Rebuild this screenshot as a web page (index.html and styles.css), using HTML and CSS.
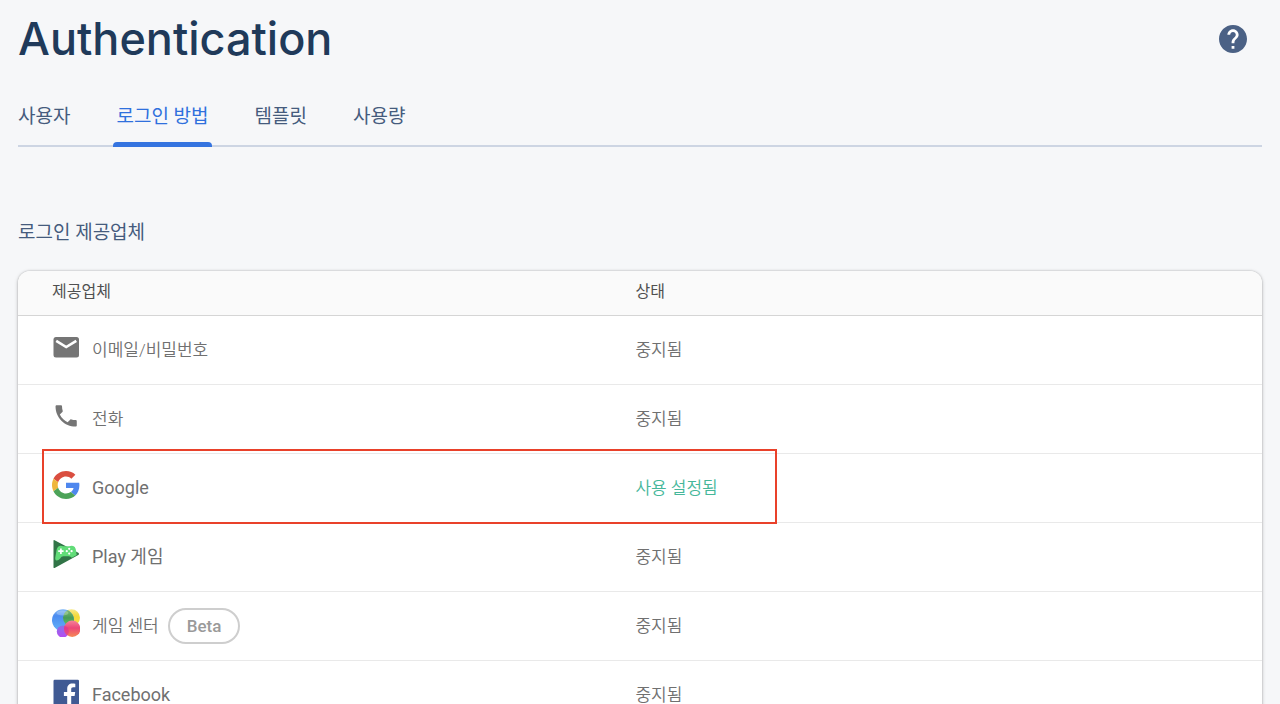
FILE: index.html
```html
<!DOCTYPE html>
<html lang="ko">
<head>
<meta charset="utf-8">
<meta name="viewport" content="width=device-width, initial-scale=1">
<title>Authentication</title>
<link rel="stylesheet" href="styles.css">
</head>
<body>
<main class="page">
  <header class="page-header">
    <h1 class="page-title">Authentication</h1>
    <button class="help" type="button" aria-label="도움말">
      <svg viewBox="2 2 20 20" width="28" height="28" aria-hidden="true"><circle cx="12" cy="12" r="9" fill="#fff"/><path fill="#4b6185" d="M12 2C6.480 2 2 6.480 2 12s4.480 10 10 10 10-4.480 10-10S17.520 2 12 2zm1 17h-2v-2h2v2zm2.070-7.750-.9.920C13.450 12.900 13 13.500 13 15h-2v-.5c0-1.100.450-2.100 1.170-2.830l1.240-1.260c.370-.360.590-.860.590-1.410 0-1.100-.9-2-2-2s-2 .9-2 2H8c0-2.210 1.790-4 4-4s4 1.790 4 4c0 .880-.360 1.680-.930 2.250z"/></svg>
    </button>
  </header>

  <nav class="tabs">
    <a class="tab" href="#users">사용자</a>
    <a class="tab tab-active" href="#methods" aria-current="page">로그인 방법</a>
    <a class="tab" href="#templates">템플릿</a>
    <a class="tab" href="#usage">사용량</a>
  </nav>

  <section class="providers">
    <h2 class="section-title">로그인 제공업체</h2>
    <div class="card">
      <table class="provider-table">
        <thead>
          <tr><th class="col-provider" scope="col">제공업체</th><th scope="col">상태</th></tr>
        </thead>
        <tbody>
          <tr>
            <td><div class="provider">
              <svg class="icon" viewBox="0 0 28 28" aria-hidden="true"><rect x="1.500" y="4" width="25.500" height="20.500" rx="2.500" fill="#757575"/><path d="M4.200 7.800 14.200 14 24.300 7.800" fill="none" stroke="#fff" stroke-width="2.600"/></svg>
              <span>이메일/비밀번호</span></div></td>
            <td>중지됨</td>
          </tr>
          <tr>
            <td><div class="provider">
              <svg class="icon" viewBox="0 0 28 28" aria-hidden="true"><path fill="#757575" transform="translate(0 -.2) scale(1.180)" d="M6.620 10.790c1.440 2.830 3.760 5.140 6.590 6.590l2.200-2.200c.270-.270.670-.360 1.020-.240 1.120.370 2.330.570 3.570.570.550 0 1 .450 1 1V20c0 .550-.450 1-1 1-9.390 0-17-7.610-17-17 0-.550.450-1 1-1h3.500c.550 0 1 .450 1 1 0 1.250.2 2.450.570 3.570.110.350.030.740-.250 1.020l-2.200 2.200z"/></svg>
              <span>전화</span></div></td>
            <td>중지됨</td>
          </tr>
          <tr>
            <td class="highlighted"><div class="provider">
              <svg class="icon" viewBox="0 0 48 48" aria-hidden="true"><path fill="#da4e40" d="M24 9.500c3.540 0 6.710 1.220 9.210 3.600l6.850-6.850C35.900 2.380 30.470 0 24 0 14.620 0 6.510 5.380 2.560 13.220l7.980 6.190C12.430 13.720 17.740 9.500 24 9.500z"/><path fill="#4e87ee" d="M46.980 24.550c0-1.570-.150-3.090-.380-4.550H24v9.020h12.940c-.580 2.960-2.260 5.480-4.780 7.180l7.730 6c4.510-4.180 7.090-10.360 7.090-17.650z"/><path fill="#efb63b" d="M10.530 28.590c-.480-1.450-.760-2.990-.760-4.590s.270-3.140.760-4.590l-7.980-6.190C.920 16.460 0 20.120 0 24c0 3.880.920 7.540 2.560 10.780l7.970-6.190z"/><path fill="#4da359" d="M24 48c6.480 0 11.930-2.130 15.890-5.810l-7.730-6c-2.150 1.450-4.920 2.300-8.160 2.300-6.260 0-11.570-4.220-13.470-9.910l-7.980 6.190C6.510 42.620 14.620 48 24 48z"/></svg>
              <span class="latin">Google</span></div></td>
            <td class="enabled">사용 설정됨</td>
          </tr>
          <tr>
            <td><div class="provider">
              <svg class="icon" viewBox="0 0 28 28" aria-hidden="true"><path fill="#317447" d="M1.500.8Q1.500-.4 2.600.2L26.300 12.800Q27.700 14 26.300 15L2.600 27.900Q1.500 28.400 1.500 27.200z"/><path fill="#61dc78" d="M4.800 9Q5.600 6 8.200 5.800q1.500-.2 3 .4h6q2-.8 4-.2 1.900.6 2.500 3l1 6-4.800 2.800q-1.200-1.500-3-1.500h-5.500q-2 0-3.200 2.200Q6.300 20.800 4.600 20.600 2.800 20.300 3.300 17.300z"/><path d="M8.900 8.500v5.400M6.200 11.200h5.400" stroke="#fff" stroke-width="1.700"/><g fill="#fff"><circle cx="17.200" cy="8.800" r="1.100"/><circle cx="17.200" cy="13.600" r="1.100"/><circle cx="14.800" cy="11.200" r="1.100"/><circle cx="19.600" cy="11.200" r="1.100"/></g></svg>
              <span class="latin">Play 게임</span></div></td>
            <td>중지됨</td>
          </tr>
          <tr>
            <td><div class="provider">
              <svg class="icon" viewBox="0 0 28 28" aria-hidden="true">
                <defs>
                  <linearGradient id="blue" x2="0" y2="1"><stop stop-color="#7db6f5"/><stop offset=".3" stop-color="#4c8cf0"/><stop offset="1" stop-color="#62b3f8"/></linearGradient>
                  <linearGradient id="yellow" x2="0" y2="1"><stop stop-color="#f6e98a"/><stop offset=".4" stop-color="#f3d93a"/><stop offset="1" stop-color="#f7e33e"/></linearGradient>
                  <linearGradient id="green" x2="0" y2="1"><stop stop-color="#86bd72"/><stop offset=".5" stop-color="#479b58"/><stop offset="1" stop-color="#65c65c"/></linearGradient>
                  <linearGradient id="pink" x2="0" y2="1"><stop stop-color="#f58398"/><stop offset=".45" stop-color="#ec4778"/><stop offset="1" stop-color="#f68a55"/></linearGradient>
                  <linearGradient id="violet" x2="0" y2="1"><stop stop-color="#8b70e8"/><stop offset="1" stop-color="#b64cf2"/></linearGradient>
                  <clipPath id="blue-area"><circle cx="11" cy="11.300" r="11"/></clipPath>
                  <clipPath id="violet-area"><circle cx="10.800" cy="22.600" r="6"/></clipPath>
                </defs>
                <circle cx="19.500" cy="8.800" r="8.500" fill="url(#yellow)"/>
                <circle cx="11" cy="11.300" r="11" fill="url(#blue)"/>
                <circle cx="19.500" cy="8.800" r="8.500" fill="url(#green)" clip-path="url(#blue-area)"/>
                <circle cx="10.800" cy="22.600" r="6" fill="url(#violet)"/>
                <circle cx="20.200" cy="19.800" r="8.200" fill="url(#pink)"/>
                <circle cx="20.200" cy="19.800" r="8.200" fill="#dc2e9b" opacity=".6" clip-path="url(#violet-area)"/>
                <ellipse cx="10.500" cy="4" rx="6" ry="2.500" fill="#fff" opacity=".25"/>
              </svg>
              <span>게임 센터</span><span class="badge">Beta</span></div></td>
            <td>중지됨</td>
          </tr>
          <tr>
            <td><div class="provider">
              <svg class="icon" viewBox="0 0 28 28" aria-hidden="true"><rect x="1.500" y="1.700" width="25.500" height="25.500" rx="1.200" fill="#405a93"/><path fill="#fff" d="M15.200 27.200V18h-3.300v-4h3.300v-3c0-3.500 2-5.400 5.200-5.400 1.300 0 2.400.1 2.900.2v3.500h-2c-1.700 0-2.100.9-2.100 2.100V14h4l-.6 4h-3.400v9.200z"/></svg>
              <span class="latin">Facebook</span></div></td>
            <td>중지됨</td>
          </tr>
        </tbody>
      </table>
    </div>
  </section>
</main>
</body>
</html>
```
FILE: styles.css
```css
* {
  box-sizing: border-box;
}

body {
  margin: 0;
  background: #f6f7f9;
  font-family: Roboto, "Noto Sans CJK KR", sans-serif;
}

.page {
  height: 100vh;
  overflow: hidden;
  padding: 8px 18px 0;
}

.page-header {
  display: flex;
  justify-content: space-between;
  align-items: center;
  height: 62px;
  padding-right: 15px;
}

.page-title {
  margin: 0;
  color: #203a5a;
  font: 500 45px/60px Inter, sans-serif;
}

.help {
  display: flex;
  padding: 0;
  border: 0;
  background: none;
  cursor: pointer;
}

.tabs {
  display: flex;
  gap: 46px;
  margin-top: 18px;
  border-bottom: 2px solid #cdd5e3;
}

.tab {
  position: relative;
  height: 57px;
  color: #455b7d;
  font-size: 19px;
  line-height: 58px;
  text-decoration: none;
}

.tab-active {
  color: #2f70dd;
}

.tab-active::after {
  content: "";
  position: absolute;
  left: -3px;
  right: -3px;
  bottom: -2px;
  height: 5px;
  border-radius: 4px 4px 0 0;
  background: #3574e0;
}

.section-title {
  margin: 72px 0 24px;
  color: #455b7d;
  font-weight: 400;
  font-size: 19px;
  line-height: 28px;
}

.card {
  border-radius: 12px;
  background: #fff;
  box-shadow: 0 0 2px rgba(0, 0, 0, .25), 0 1px 4px rgba(0, 0, 0, .2);
}

.provider-table {
  width: 100%;
  border-spacing: 0;
  table-layout: fixed;
  color: #707070;
  font-size: 17px;
}

.provider-table th {
  height: 45px;
  padding: 0 0 2px 34px;
  border-bottom: 1px solid #d5d5d5;
  background: #fafafa;
  color: #505050;
  font-weight: 400;
  font-size: 16px;
  line-height: 24px;
  text-align: left;
}

.provider-table th:first-child {
  border-top-left-radius: 12px;
}

.provider-table th:last-child {
  border-top-right-radius: 12px;
}

.provider-table .col-provider {
  width: 46.9%;
}

.provider-table td {
  height: 69px;
  padding: 0 0 0 34px;
  border-bottom: 1px solid #e9e9e9;
  font-weight: 350;
  line-height: 26px;
}

.provider-table .enabled {
  color: #46b79a;
}

.provider {
  display: flex;
  align-items: center;
}

.icon {
  flex: none;
  width: 28px;
  height: 28px;
  margin: 0 12px 6px 0;
}

.latin {
  font-weight: 400;
  font-size: 18px;
}

.badge {
  margin-left: 9px;
  padding: 0 17px;
  border: 2px solid #cecece;
  border-radius: 18px;
  color: #9a9a9a;
  font-weight: 500;
  font-size: 17px;
  line-height: 32px;
}

.highlighted {
  position: relative;
}

.highlighted::after {
  content: "";
  position: absolute;
  inset: -5px -176px -2px 24px;
  border: 2px solid #e9412a;
  pointer-events: none;
}
```
